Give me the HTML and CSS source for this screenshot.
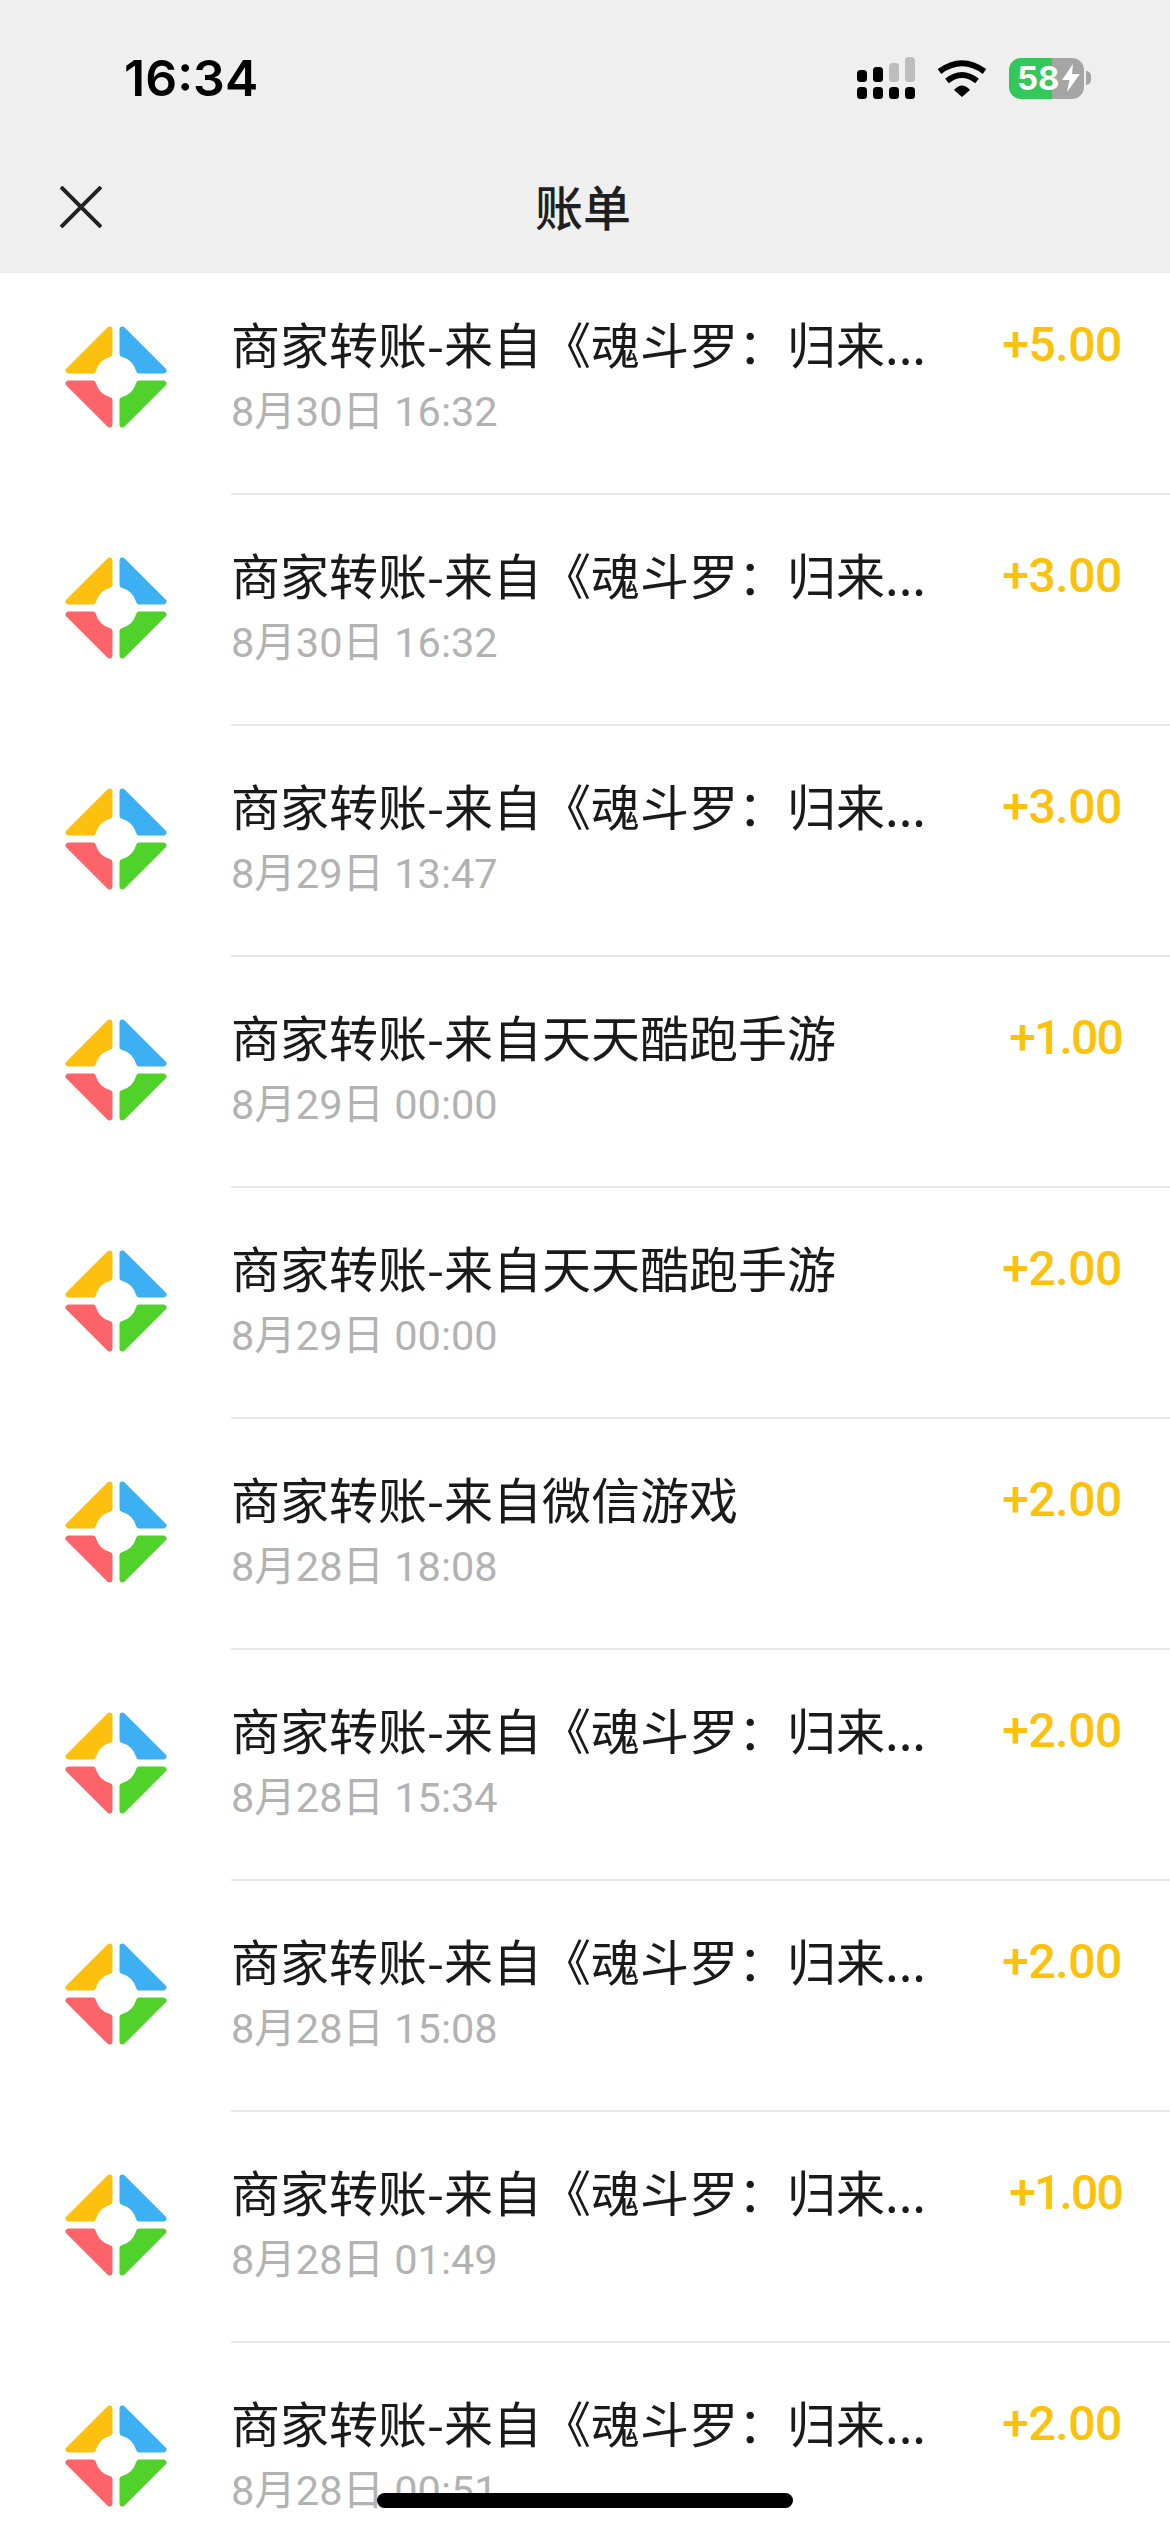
FILE: index.html
```html
<!DOCTYPE html>
<html>
  <head>
    <title>账单</title>
    <meta charset="UTF-8">
    <link rel="stylesheet" href="styles.css">
  </head>
  <body>
    <svg class="defs" width="0" height="0">
      <symbol id="logo" viewBox="-51 -51 102 102">
        <path fill="#fdc00f" stroke="#fdc00f" d="M-6.5 -47.5 L-47.5 -6.5 L-23.1 -6.5 A24 24 0 0 1 -6.5 -23.1 Z"/>
        <path fill="#3cb0f3" stroke="#3cb0f3" d="M6.5 -47.5 L47.5 -6.5 L23.1 -6.5 A24 24 0 0 0 6.5 -23.1 Z"/>
        <path fill="#fc6469" stroke="#fc6469" d="M-6.5 47.5 L-47.5 6.5 L-23.1 6.5 A24 24 0 0 0 -6.5 23.1 Z"/>
        <path fill="#50d22b" stroke="#50d22b" d="M6.5 47.5 L47.5 6.5 L23.1 6.5 A24 24 0 0 1 6.5 23.1 Z"/>
      </symbol>
    </svg>

    <header class="top">
      <div class="status">
        <span class="time">16:34</span>
        <div class="status-icons">
          <svg class="signal" width="58" height="42" viewBox="0 0 58 42">
            <rect x="0" y="13" width="10" height="12" rx="3.5"/>
            <rect x="16" y="10" width="10" height="15" rx="3.5"/>
            <rect class="off" x="32" y="6" width="10" height="19" rx="3.5"/>
            <rect class="off" x="48" y="0" width="10" height="25" rx="3.5"/>
            <rect x="0" y="30" width="10" height="12" rx="3.5"/>
            <rect x="16" y="30" width="10" height="12" rx="3.5"/>
            <rect x="32" y="30" width="10" height="12" rx="3.5"/>
            <rect x="48" y="30" width="10" height="12" rx="3.5"/>
          </svg>
          <svg class="wifi" width="50" height="37" viewBox="0 0 50 37">
            <path fill="none" stroke="#000" stroke-width="6" d="M2.5 11.5 Q25 -5 47.5 11.5"/>
            <path fill="none" stroke="#000" stroke-width="6" d="M10 21 Q25 9 40 21"/>
            <path d="M17 30 Q25 21 33 30 L25 37 Z"/>
          </svg>
          <div class="battery">
            <div class="battery-body">
              <span class="battery-num">58</span>
              <svg width="18" height="28" viewBox="0 0 18 28">
                <path fill="#fff" d="M11 0 L0 16 L7.5 16 L5 28 L18 10 L10 10 Z"/>
              </svg>
            </div>
            <div class="battery-tip"></div>
          </div>
        </div>
      </div>
      <div class="nav">
        <svg class="close" width="42" height="42" viewBox="0 0 42 42">
          <path fill="none" stroke="#222" stroke-width="4" d="M1 1 L41 41 M41 1 L1 41"/>
        </svg>
        <h1>账单</h1>
      </div>
    </header>

    <div class="list">
      <div class="row">
        <svg class="logo"><use href="#logo"/></svg>
        <div class="row-body">
          <div class="info">
            <div class="name">商家转账-来自《魂斗罗：归来...</div>
            <div class="date">8月30日 16:32</div>
          </div>
          <div class="amount">+5.00</div>
        </div>
      </div>
      <div class="row">
        <svg class="logo"><use href="#logo"/></svg>
        <div class="row-body">
          <div class="info">
            <div class="name">商家转账-来自《魂斗罗：归来...</div>
            <div class="date">8月30日 16:32</div>
          </div>
          <div class="amount">+3.00</div>
        </div>
      </div>
      <div class="row">
        <svg class="logo"><use href="#logo"/></svg>
        <div class="row-body">
          <div class="info">
            <div class="name">商家转账-来自《魂斗罗：归来...</div>
            <div class="date">8月29日 13:47</div>
          </div>
          <div class="amount">+3.00</div>
        </div>
      </div>
      <div class="row">
        <svg class="logo"><use href="#logo"/></svg>
        <div class="row-body">
          <div class="info">
            <div class="name">商家转账-来自天天酷跑手游</div>
            <div class="date">8月29日 00:00</div>
          </div>
          <div class="amount narrow">+1.00</div>
        </div>
      </div>
      <div class="row">
        <svg class="logo"><use href="#logo"/></svg>
        <div class="row-body">
          <div class="info">
            <div class="name">商家转账-来自天天酷跑手游</div>
            <div class="date">8月29日 00:00</div>
          </div>
          <div class="amount">+2.00</div>
        </div>
      </div>
      <div class="row">
        <svg class="logo"><use href="#logo"/></svg>
        <div class="row-body">
          <div class="info">
            <div class="name">商家转账-来自微信游戏</div>
            <div class="date">8月28日 18:08</div>
          </div>
          <div class="amount">+2.00</div>
        </div>
      </div>
      <div class="row">
        <svg class="logo"><use href="#logo"/></svg>
        <div class="row-body">
          <div class="info">
            <div class="name">商家转账-来自《魂斗罗：归来...</div>
            <div class="date">8月28日 15:34</div>
          </div>
          <div class="amount">+2.00</div>
        </div>
      </div>
      <div class="row">
        <svg class="logo"><use href="#logo"/></svg>
        <div class="row-body">
          <div class="info">
            <div class="name">商家转账-来自《魂斗罗：归来...</div>
            <div class="date">8月28日 15:08</div>
          </div>
          <div class="amount">+2.00</div>
        </div>
      </div>
      <div class="row">
        <svg class="logo"><use href="#logo"/></svg>
        <div class="row-body">
          <div class="info">
            <div class="name">商家转账-来自《魂斗罗：归来...</div>
            <div class="date">8月28日 01:49</div>
          </div>
          <div class="amount narrow">+1.00</div>
        </div>
      </div>
      <div class="row">
        <svg class="logo"><use href="#logo"/></svg>
        <div class="row-body">
          <div class="info">
            <div class="name">商家转账-来自《魂斗罗：归来...</div>
            <div class="date">8月28日 00:51</div>
          </div>
          <div class="amount">+2.00</div>
        </div>
      </div>
    </div>

    <div class="home-bar"></div>
  </body>
</html>
```

FILE: styles.css
```css
html, body
{
  margin: 0;
  height: 2532px;
  overflow: hidden;
}
body
{
  position: relative;
  background-color: #ffffff;
  font-family: Roboto, "Noto Sans CJK SC", sans-serif;
}
.defs {position: absolute;}

.top
{
  position: relative;
  z-index: 2;
  height: 273px;
  background-color: #efefef;
}
.status
{
  height: 156px;
  display: flex;
  align-items: center;
  justify-content: space-between;
  padding: 0 79px 0 124px;
}
.time
{
  font-family: Inter, sans-serif;
  font-size: 50px;
  font-weight: 600;
  color: #000000;
}
.status-icons
{
  display: flex;
  align-items: center;
  gap: 22px;
}
.status-icons svg {display: block;}
.signal .off {fill: #bdbdbd;}
.battery
{
  display: flex;
  align-items: center;
  gap: 2px;
}
.battery-body
{
  width: 75px;
  height: 41px;
  border-radius: 12px;
  background: linear-gradient(90deg, #34c759 43px, #a5a5a5 43px);
  display: flex;
  align-items: center;
  gap: 2px;
  padding-left: 8px;
  box-sizing: border-box;
}
.battery-num
{
  font-family: Inter, sans-serif;
  font-size: 33px;
  font-weight: 700;
  color: #ffffff;
}
.battery-tip
{
  width: 5px;
  height: 14px;
  background-color: #a5a5a5;
  border-radius: 0 7px 7px 0;
}
.nav
{
  height: 97px;
  position: relative;
  display: flex;
  align-items: center;
  justify-content: center;
  padding-right: 4px;
}
.close
{
  position: absolute;
  left: 60px;
  top: 30px;
}
h1
{
  margin: 0;
  font-family: "Noto Sans CJK SC", sans-serif;
  font-size: 48px;
  font-weight: 500;
  color: #1f1f1f;
}

.list {margin-top: -9px;}
.row
{
  height: 231px;
  display: flex;
  align-items: flex-start;
}
.logo
{
  width: 102px;
  height: 102px;
  margin: 62px 64px 0 65px;
  flex: none;
  stroke-width: 6;
  stroke-linejoin: round;
}
.row-body
{
  flex: 1;
  align-self: stretch;
  display: flex;
  justify-content: space-between;
  align-items: flex-start;
  padding: 49px 48px 0 0;
  border-bottom: 2px solid #e8e8e8;
  box-sizing: border-box;
  min-width: 0;
}
.info {min-width: 0;}
.name
{
  font-family: "Noto Sans CJK SC", sans-serif;
  font-size: 49px;
  line-height: 60px;
  color: #1a1a1a;
  white-space: nowrap;
}
.date
{
  margin-top: 9px;
  font-size: 41.5px;
  line-height: 60px;
  color: #b2b2b2;
}
.amount
{
  margin-top: 2px;
  font-size: 48px;
  font-weight: 500;
  line-height: 60px;
  letter-spacing: -0.4px;
  color: #fcc10a;
}
.narrow {letter-spacing: -1.8px;}

.home-bar
{
  position: absolute;
  left: 377px;
  top: 2493px;
  width: 416px;
  height: 15px;
  border-radius: 8px;
  background-color: #000000;
  z-index: 3;
}
```
